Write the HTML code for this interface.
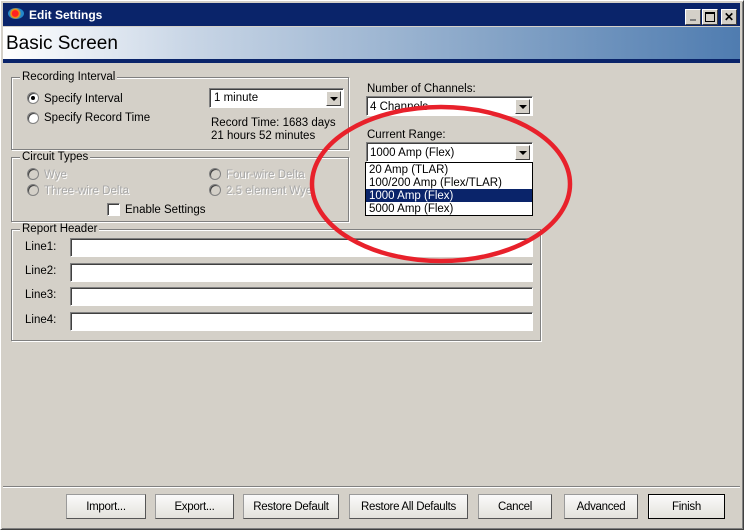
<!DOCTYPE html>
<html><head><style>
*{box-sizing:border-box;margin:0;padding:0}
body{width:744px;height:530px;background:#d4d0c8;font-family:"Liberation Sans",sans-serif;font-size:11.5px;color:#000;position:relative;overflow:hidden}
.a{position:absolute;white-space:nowrap}
.win{position:absolute;left:0;top:0;width:744px;height:530px;border:1px solid #fff;border-right-color:#404040;border-bottom-color:#404040;box-shadow:inset 1px 1px 0 #d4d0c8,inset -1px -1px 0 #808080}
.title{left:3px;top:3px;width:737px;height:23px;background:#0a246a;color:#fff;font-weight:bold;font-size:12px}
.hdr{left:3px;top:27px;width:737px;height:32px;background:linear-gradient(90deg,#fff 0%,#c9d6e6 25%,#88a6c8 65%,#4f7cb0 100%);font-size:19px;padding:6px 0 0 3px}
.bar{left:3px;top:59px;width:737px;height:4px;background:#0a246a}
.grp{position:absolute;border:1px solid #808080;box-shadow:1px 1px 0 #fff,inset 1px 1px 0 #fff}
.lg{position:absolute;top:-8px;left:8px;background:#d4d0c8;padding:0 2px}
.rad{position:absolute;width:12px;height:12px;border-radius:50%;background:#fff;border:1px solid #808080;box-shadow:inset 1px 1px 0 #404040}
.rad.d{background:#d4d0c8}
.dis{color:#a8a8a8;text-shadow:1px 1px 0 #fff}
.box{position:absolute;background:#fff;border:1px solid #808080;border-right-color:#fff;border-bottom-color:#fff;box-shadow:inset 1px 1px 0 #404040}
.dd{position:absolute;right:2px;top:2px;width:15px;height:15px;background:#d4d0c8;border:1px solid #fff;border-right-color:#404040;border-bottom-color:#404040}
.dd:after{content:"";position:absolute;left:3px;top:5px;border:4px solid transparent;border-top:4px solid #000;border-bottom:0}
.btn{position:absolute;top:494px;height:25px;background:linear-gradient(#fafafa,#e4e2dc);border:1px solid #9a9a9a;border-right-color:#555;border-bottom-color:#555;text-align:center;line-height:24px;font-size:11.5px;letter-spacing:-0.3px}
.tb{position:absolute;top:6px;width:16px;height:16px;background:#d4d0c8;border:1px solid #fff;border-right-color:#404040;border-bottom-color:#404040;font-size:12px;color:#000;text-align:center;line-height:14px;font-weight:bold}
</style></head><body>
<div class="win"></div>
<div class="a title"><span class="a" style="left:5px;top:5px;width:16px;height:11px;border-radius:50%;background:radial-gradient(circle at 45% 50%,#f22 0 3px,#f90 4px,#28c 6px)"></span><span class="a" style="left:26px;top:5px">Edit Settings</span>
<div class="tb" style="left:682px"><span style="display:block;margin:9px 4px 0;height:2px;background:#808080"></span></div>
<div class="tb" style="left:699px"><span style="display:block;margin:2px;height:10px;border:1px solid #000;border-top-width:2px"></span></div>
<div class="tb" style="left:718px">✕</div>
</div>
<div class="a hdr">Basic Screen</div>
<div class="a bar"></div>

<div class="grp" style="left:11px;top:77px;width:338px;height:73px"><span class="lg" style="top:-7px">Recording Interval</span></div>
<div class="rad" style="left:27px;top:92px"><span class="a" style="left:3px;top:3px;width:4px;height:4px;background:#000;border-radius:50%"></span></div>
<span class="a" style="left:44px;top:93px">Specify Interval</span>
<div class="rad" style="left:27px;top:112px"></div>
<span class="a" style="left:44px;top:112px">Specify Record Time</span>
<div class="box" style="left:209px;top:88px;width:135px;height:20px"><span class="a" style="left:4px;top:3px">1 minute</span><div class="dd"></div></div>
<span class="a" style="left:211px;top:117px">Record Time: 1683 days</span>
<span class="a" style="left:211px;top:130px">21 hours 52 minutes</span>

<div class="grp" style="left:11px;top:157px;width:338px;height:65px"><span class="lg" style="top:-7px">Circuit Types</span></div>
<div class="rad d" style="left:27px;top:168px"></div><span class="a dis" style="left:44px;top:169px">Wye</span>
<div class="rad d" style="left:27px;top:184px"></div><span class="a dis" style="left:44px;top:185px">Three-wire Delta</span>
<div class="rad d" style="left:209px;top:168px"></div><span class="a dis" style="left:226px;top:169px">Four-wire Delta</span>
<div class="rad d" style="left:209px;top:184px"></div><span class="a dis" style="left:226px;top:185px">2.5 element Wye</span>
<div class="box" style="left:107px;top:203px;width:13px;height:13px"></div><span class="a" style="left:125px;top:204px">Enable Settings</span>

<div class="grp" style="left:11px;top:229px;width:530px;height:112px"><span class="lg" style="top:-7px">Report Header</span></div>
<span class="a" style="left:25px;top:241px">Line1:</span><div class="box" style="left:70px;top:238px;width:463px;height:19px"></div>
<span class="a" style="left:25px;top:265px">Line2:</span><div class="box" style="left:70px;top:263px;width:463px;height:19px"></div>
<span class="a" style="left:25px;top:289px">Line3:</span><div class="box" style="left:70px;top:287px;width:463px;height:19px"></div>
<span class="a" style="left:25px;top:314px">Line4:</span><div class="box" style="left:70px;top:312px;width:463px;height:19px"></div>

<span class="a" style="left:367px;top:83px">Number of Channels:</span>
<div class="box" style="left:366px;top:96px;width:167px;height:20px"><span class="a" style="left:3px;top:4px">4 Channels</span><div class="dd"></div></div>
<span class="a" style="left:367px;top:129px">Current Range:</span>
<div class="box" style="left:366px;top:142px;width:167px;height:20px"><span class="a" style="left:3px;top:4px">1000 Amp (Flex)</span><div class="dd"></div></div>
<div class="a" style="left:365px;top:162px;width:168px;height:54px;background:#fff;border:1px solid #000">
<div style="height:13px;padding-left:3px;line-height:14px">20 Amp (TLAR)</div>
<div style="height:13px;padding-left:3px;line-height:14px">100/200 Amp (Flex/TLAR)</div>
<div style="height:13px;padding-left:3px;line-height:14px;background:#0a246a;color:#fff">1000 Amp (Flex)</div>
<div style="height:13px;padding-left:3px;line-height:14px">5000 Amp (Flex)</div>
</div>

<svg class="a" style="left:0;top:0" width="744" height="530"><ellipse cx="441" cy="184" rx="129" ry="77" fill="none" stroke="#e8212b" stroke-width="4.5"/></svg>

<div class="a" style="left:3px;top:486px;width:737px;height:2px;border-top:1px solid #808080;border-bottom:1px solid #fff"></div>
<div class="btn" style="left:66px;width:80px">Import...</div>
<div class="btn" style="left:155px;width:79px">Export...</div>
<div class="btn" style="left:243px;width:96px">Restore Default</div>
<div class="btn" style="left:349px;width:119px">Restore All Defaults</div>
<div class="btn" style="left:478px;width:74px">Cancel</div>
<div class="btn" style="left:564px;width:74px">Advanced</div>
<div class="btn" style="left:648px;width:77px;border:1px solid #000;box-shadow:inset 1px 1px 0 #fff">Finish</div>
</body></html>
